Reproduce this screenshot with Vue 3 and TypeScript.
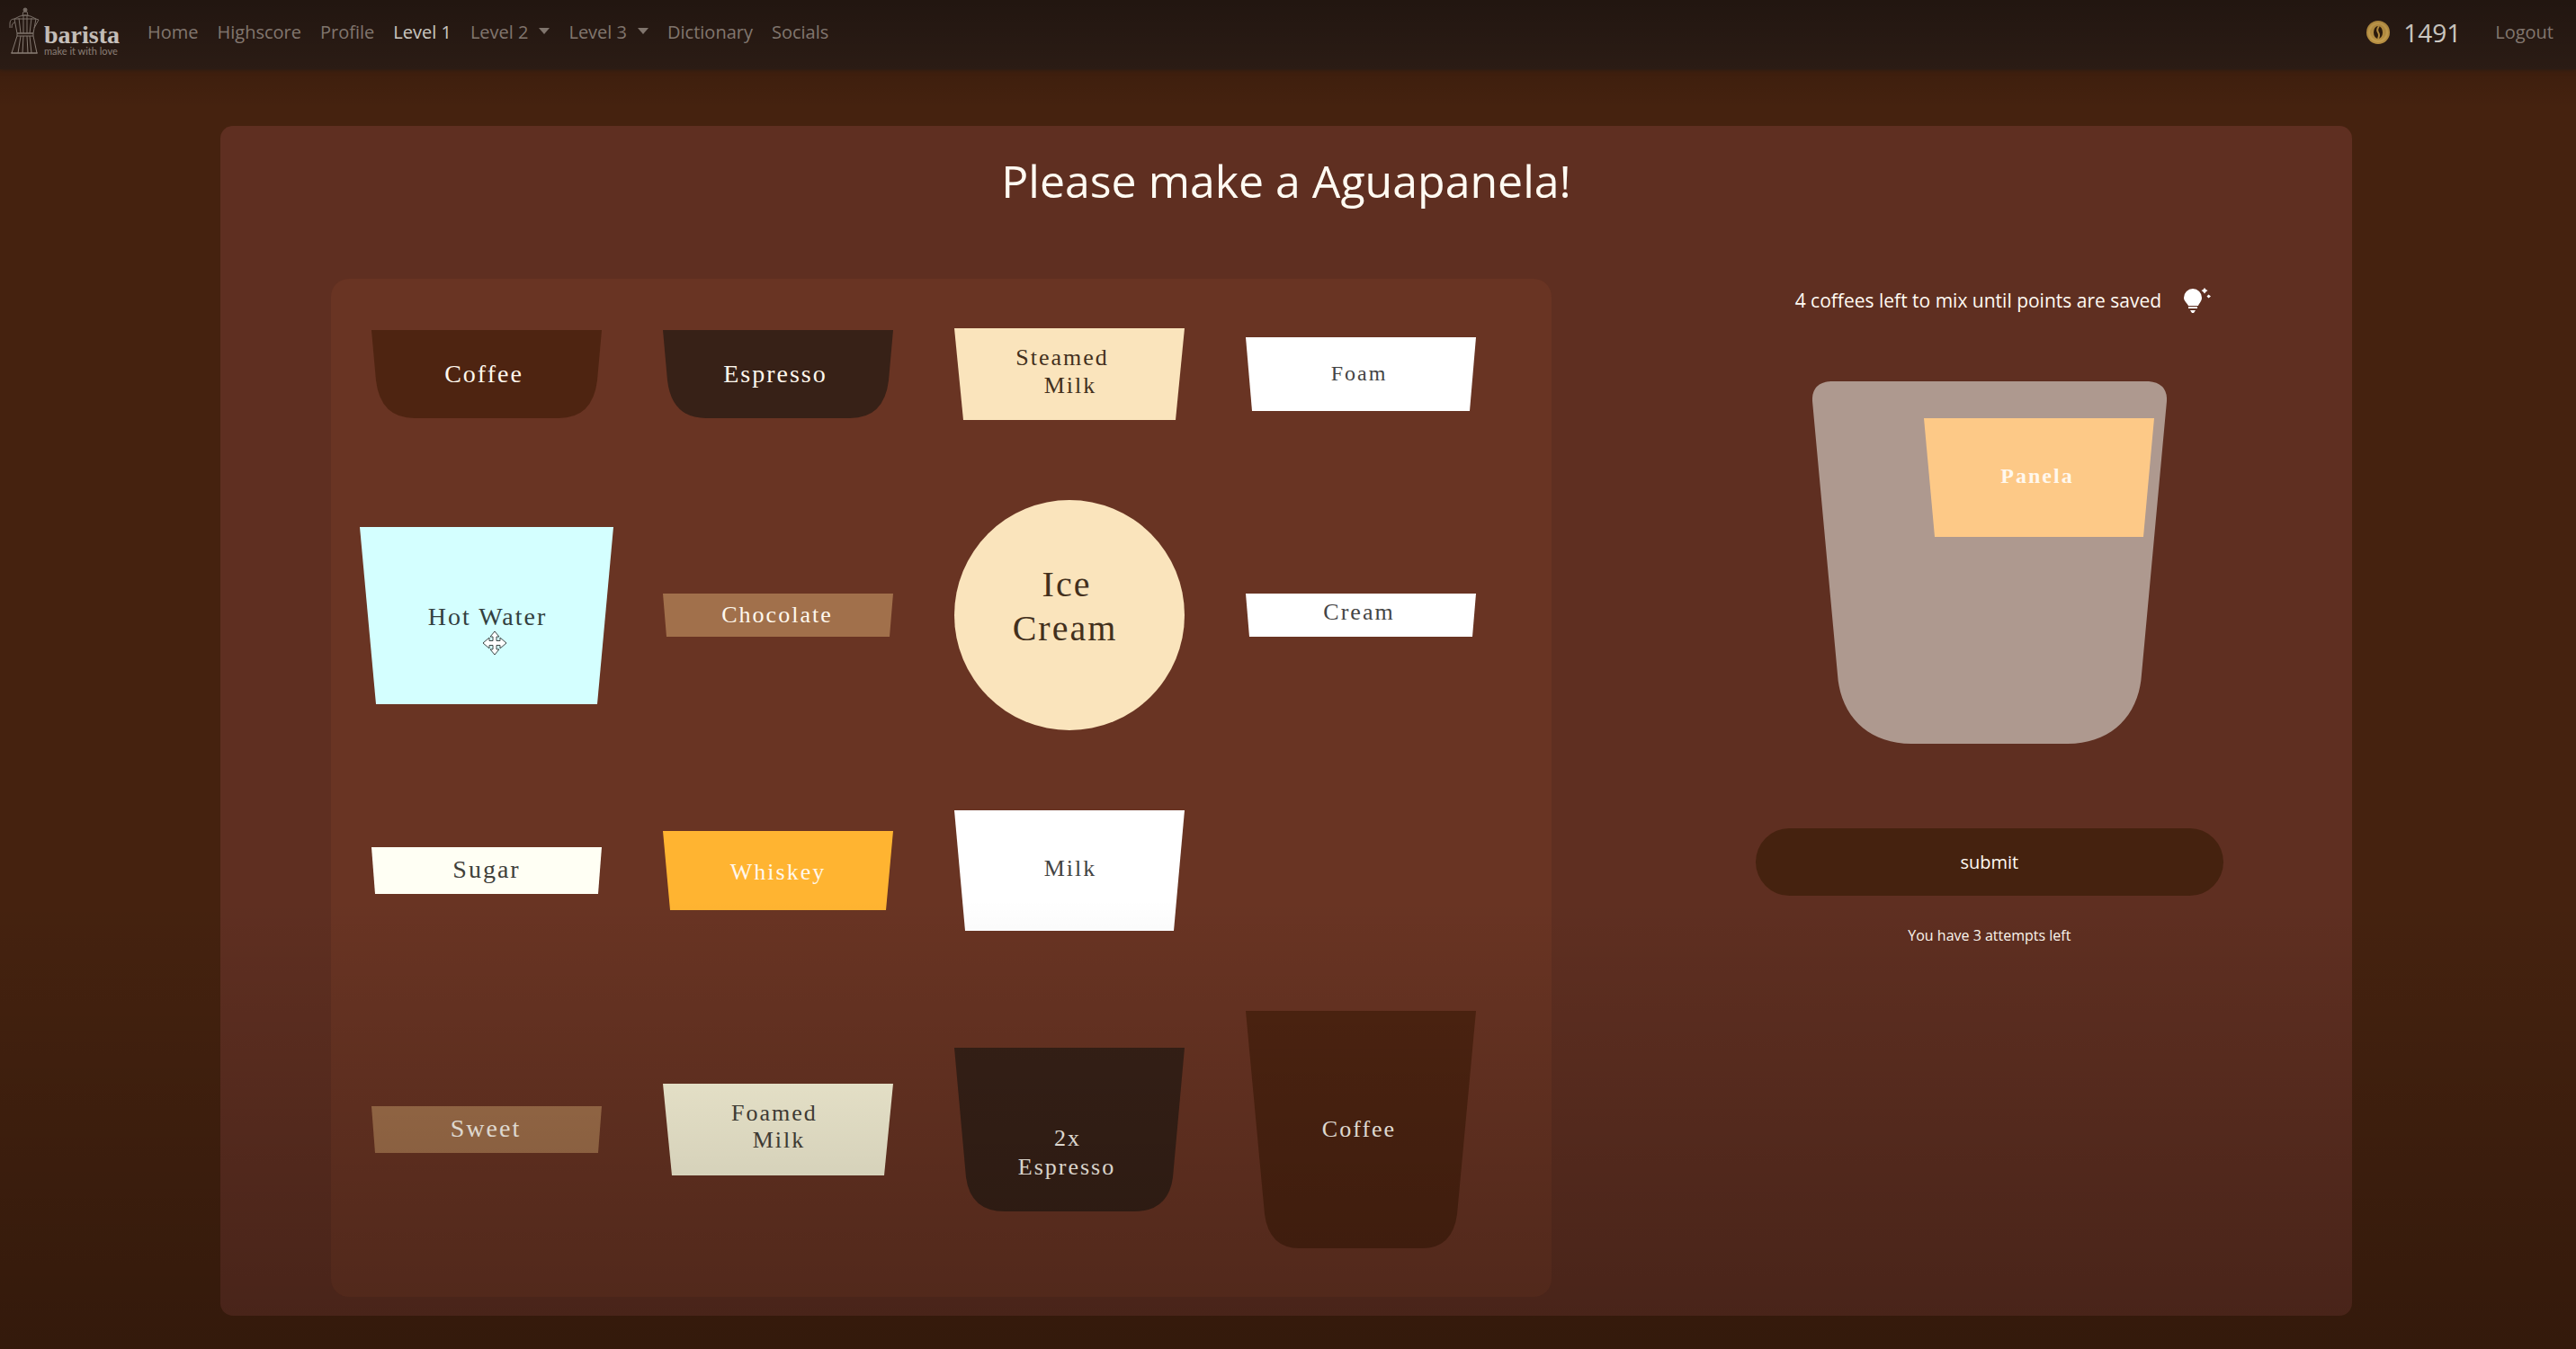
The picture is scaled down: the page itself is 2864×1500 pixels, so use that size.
<script setup lang="ts">
import { ref } from 'vue'

interface Line {
  text: string
  x: number
  y: number
}

interface Ingredient {
  id: string
  width: number
  height: number
  path: string
  fill: string
  ink: string
  size: number
  lines: Line[]
  hovered?: boolean
}

interface NavItem {
  label: string
  active?: boolean
  menu?: boolean
}

const navItems: NavItem[] = [
  { label: 'Home' },
  { label: 'Highscore' },
  { label: 'Profile' },
  { label: 'Level 1', active: true },
  { label: 'Level 2', menu: true },
  { label: 'Level 3', menu: true },
  { label: 'Dictionary' },
  { label: 'Socials' },
]

const points = ref(1491)
const coffeesLeft = ref(4)
const attemptsLeft = ref(3)
const drink = ref('Aguapanela')

// A glass slice: wide at the rim, tapering by `inset` on each side.
const slice = (w: number, h: number, inset: number): string =>
  `M0 0H${w}L${w - inset} ${h}H${inset}Z`

const light = '#fff8ee'

const rows: (Ingredient | null)[][] = [
  [
    { id: 'coffee', width: 256, height: 98, path: 'M0 0H256L251 56Q246 98 208 98H48Q10 98 5 56Z', fill: '#4e2411', ink: light, size: 28, lines: [{ text: 'Coffee', x: 125, y: 58 }] },
    { id: 'espresso', width: 256, height: 98, path: 'M0 0H256L251 56Q246 98 208 98H48Q10 98 5 56Z', fill: '#372117', ink: light, size: 28, lines: [{ text: 'Espresso', x: 125, y: 58 }] },
    { id: 'steamed-milk', width: 256, height: 102, path: slice(256, 102, 10), fill: '#fae4bc', ink: '#43301d', size: 26, lines: [{ text: 'Steamed', x: 120, y: 41 }, { text: 'Milk', x: 129, y: 72 }] },
    { id: 'foam', width: 256, height: 82, path: slice(256, 82, 7), fill: '#ffffff', ink: '#444444', size: 24, lines: [{ text: 'Foam', x: 126, y: 48 }] },
  ],
  [
    { id: 'hot-water', width: 282, height: 197, path: slice(282, 197, 18), fill: '#d4ffff', ink: '#333f3f', size: 28, lines: [{ text: 'Hot Water', x: 142, y: 109 }], hovered: true },
    { id: 'chocolate', width: 256, height: 48, path: slice(256, 48, 4), fill: '#a1704b', ink: light, size: 26, lines: [{ text: 'Chocolate', x: 127, y: 32 }] },
    { id: 'ice-cream', width: 256, height: 256, path: 'M128 0A128 128 0 1 1 128 256A128 128 0 1 1 128 0Z', fill: '#fae4bc', ink: '#43301d', size: 40, lines: [{ text: 'Ice', x: 125, y: 107 }, { text: 'Cream', x: 123, y: 156 }] },
    { id: 'cream', width: 256, height: 48, path: slice(256, 48, 4), fill: '#ffffff', ink: '#444444', size: 26, lines: [{ text: 'Cream', x: 126, y: 29 }] },
  ],
  [
    { id: 'sugar', width: 256, height: 52, path: slice(256, 52, 4), fill: '#fffff4', ink: '#403f3a', size: 28, lines: [{ text: 'Sugar', x: 128, y: 34 }] },
    { id: 'whiskey', width: 256, height: 88, path: slice(256, 88, 8), fill: '#ffb431', ink: light, size: 26, lines: [{ text: 'Whiskey', x: 128, y: 54 }] },
    { id: 'milk', width: 256, height: 134, path: slice(256, 134, 12), fill: '#ffffff', ink: '#444444', size: 26, lines: [{ text: 'Milk', x: 129, y: 73 }] },
    null,
  ],
  [
    { id: 'sweet', width: 256, height: 52, path: slice(256, 52, 4), fill: '#a1704b', ink: light, size: 28, lines: [{ text: 'Sweet', x: 127, y: 34 }] },
    { id: 'foamed-milk', width: 256, height: 102, path: slice(256, 102, 10), fill: '#fdf8dc', ink: '#47433a', size: 26, lines: [{ text: 'Foamed', x: 124, y: 41 }, { text: 'Milk', x: 129, y: 71 }] },
    { id: 'double-espresso', width: 256, height: 182, path: 'M0 0H256L243 144Q238 182 200 182H56Q18 182 13 144Z', fill: '#372117', ink: light, size: 26, lines: [{ text: '2x', x: 126, y: 109 }, { text: 'Espresso', x: 125, y: 141 }] },
    { id: 'large-coffee', width: 256, height: 264, path: 'M0 0H256L235 226Q230 264 196 264H60Q26 264 21 226Z', fill: '#4e2411', ink: light, size: 26, lines: [{ text: 'Coffee', x: 126, y: 140 }] },
  ],
]
</script>

<template>
  <div class="page">
    <header class="navbar">
      <a href="#" class="brand" aria-label="barista, make it with love">
        <svg class="pot" width="36" height="56" viewBox="0 0 36 56" aria-hidden="true">
          <g fill="none" stroke="#a3958b" stroke-width="1">
            <circle cx="19" cy="3" r="2" fill="#a3958b" />
            <path d="M17 5h4l1 4h-6zM7 13Q13 9 19 9T31 13L28 29H10ZM7 13H31L34 14L29 23M7 13Q2 13 2 18V23M4 23Q4 17 8 17" />
            <path d="M10 29h18M10 32h18M10 29v3M28 29v3M10 32L4 51H32L28 32M14 32L11 51M17 32L16 51M21 32L22 51M24 32L26 51M12 12L14 29M17 10V29M21 10V29M26 12L24 29M3 51h30" />
          </g>
        </svg>
        <span class="wordmark">
          <span class="name">barista</span>
          <span class="tagline">make it with love</span>
        </span>
      </a>
      <nav class="links" aria-label="Main">
        <a v-for="item in navItems" :key="item.label" href="#" :class="{ active: item.active }">
          {{ item.label }}<i v-if="item.menu" class="caret"></i>
        </a>
      </nav>
      <div class="account">
        <svg width="28" height="28" viewBox="0 0 28 28" aria-hidden="true">
          <circle cx="14" cy="14" r="13" fill="#dfae50" />
          <circle cx="14" cy="14" r="10" fill="none" stroke="#f0c060" stroke-width="2" />
          <ellipse cx="14" cy="14" rx="5" ry="7" fill="#35200f" />
          <path d="M15 7Q12 11 14 14T14 21" fill="none" stroke="#dfae50" stroke-width="2" />
        </svg>
        <span class="points">{{ points }}</span>
        <a href="#" class="logout">Logout</a>
      </div>
    </header>

    <main class="game">
      <h1>Please make a {{ drink }}!</h1>
      <div class="columns">
        <section class="bench" aria-label="Ingredients">
          <template v-for="(row, r) in rows" :key="r">
            <div v-for="(item, c) in row" :key="c" class="cell">
              <button v-if="item" type="button" class="ingredient" draggable="true">
                <svg :width="item.width" :height="item.height" :viewBox="`0 0 ${item.width} ${item.height}`">
                  <path :d="item.path" :fill="item.fill" />
                  <text
                    v-for="line in item.lines"
                    :key="line.text"
                    :x="line.x"
                    :y="line.y"
                    :fill="item.ink"
                    :font-size="item.size"
                    text-anchor="middle"
                  >{{ line.text }}</text>
                </svg>
                <svg v-if="item.hovered" class="cursor" width="28" height="28" viewBox="0 0 28 28" aria-hidden="true">
                  <path
                    d="M14 1L19 7H16V11.500H20V8L27 14L20 20V16.500H16V21H19L14 27L9 21H12V16.500H8V20L1 14L8 8V11.500H12V7H9Z"
                    fill="#ffffff"
                    stroke="#3c4646"
                    stroke-width="1"
                  />
                </svg>
              </button>
            </div>
          </template>
        </section>

        <section class="mixer" aria-label="Your drink">
          <p class="hint">
            <span>{{ coffeesLeft }} coffees left to mix until points are saved</span>
            <button type="button" class="bulb" aria-label="Show hint">
              <svg width="30" height="28" viewBox="0 0 30 28" aria-hidden="true">
                <path d="M10 1a10 10 0 0 1 10 10c0 4-3 6-4 9H5C4 17 0 15 0 11A10 10 0 0 1 10 1ZM5 21H15V23H5ZM7 25H13L11 28H9Z" fill="#fff" />
                <path d="M23 0L24.500 2L26.500 3L24.500 4.500L23 6.500L21.500 4.500L19.500 3L21.500 2ZM27.500 7.500L30 9.500L27.500 11.500L25.500 9.500Z" fill="#fff" />
              </svg>
            </button>
          </p>
          <div class="glass">
            <svg width="394" height="403" viewBox="0 0 394 403" aria-hidden="true">
              <path d="M20 0H374Q395 2 394 22L366 326C363 372 332 403 284 403H110C62 403 31 372 28 326L0 22Q-1 2 20 0Z" fill="#ae998f" />
            </svg>
            <button type="button" class="ingredient poured" draggable="true">
              <svg width="256" height="132" viewBox="0 0 256 132">
                <path :d="slice(256, 132, 12)" fill="#fdc987" />
                <text x="126" y="72" :fill="light" font-size="24" font-weight="bold" text-anchor="middle">Panela</text>
              </svg>
            </button>
          </div>
          <button type="button" class="submit">submit</button>
          <p class="attempts">You have {{ attemptsLeft }} attempts left</p>
        </section>
      </div>
    </main>
    <div class="shade" aria-hidden="true"></div>
  </div>
</template>

<style>
body {
  background: #45220f;
}
</style>

<style scoped>
.page {
  position: relative;
  box-sizing: border-box;
  min-height: 100vh;
  padding-bottom: 37px;
  overflow: hidden;
  background: #45220f;
  color: #fffaf2;
  font-family: 'Trebuchet MS', 'Open Sans', sans-serif;
}

.shade {
  position: absolute;
  inset: 0;
  pointer-events: none;
  background:
    linear-gradient(rgba(0, 0, 0, 0.3), transparent) top / 100% 120px no-repeat,
    linear-gradient(transparent, rgba(0, 0, 0, 0.25)) bottom / 100% 500px no-repeat;
}

.navbar {
  display: flex;
  align-items: center;
  box-sizing: border-box;
  height: 77px;
  padding: 0 25px 6px 9px;
  background: #301f17;
  box-shadow: 0 1px 4px #301f17;
  font-size: 20px;
}

a {
  color: inherit;
  text-decoration: none;
}

.brand {
  display: flex;
  align-items: center;
  gap: 4px;
  width: 155px;
}

.wordmark {
  display: flex;
  flex-direction: column;
  padding-top: 18px;
  white-space: nowrap;
}

.name {
  color: #f4ece6;
  font: bold 28px/24px 'Liberation Serif', serif;
}

.tagline {
  color: #a3958b;
  font: 11px/12px Lato, sans-serif;
}

.links {
  display: flex;
  flex: 1;
  gap: 21px;
  color: #a3958b;
}

.links .active {
  color: #fffaf2;
}

.caret {
  display: inline-block;
  margin-left: 12px;
  border: 6px solid transparent;
  border-top: 7px solid currentColor;
  border-bottom: 0;
  vertical-align: 5px;
}

.account {
  display: flex;
  align-items: center;
}

.points {
  margin: 0 38px 0 14px;
  color: #fffaf2;
  font-size: 28px;
}

.logout {
  color: #a3958b;
}

.game {
  margin: 63px 249px 0 245px;
  padding: 29px 0 21px;
  border-radius: 14px;
  background: #5f2f21;
}

h1 {
  margin: 0 0 77px;
  font-size: 50px;
  font-weight: 500;
  line-height: 64px;
  text-align: center;
}

.columns {
  display: grid;
  grid-template-columns: 1358fr 807fr;
  gap: 84px;
  padding-left: 123px;
}

.bench {
  display: grid;
  grid-template-columns: repeat(4, 1fr);
  align-items: center;
  row-gap: 89px;
  padding: 55px 50px 54px 11px;
  border-radius: 20px;
  background: #693423;
}

.cell {
  display: flex;
  justify-content: center;
}

.ingredient {
  position: relative;
  display: block;
  padding: 0;
  border: 0;
  background: none;
  cursor: move;
}

.ingredient svg {
  display: block;
}

.ingredient text {
  font-family: 'Liberation Serif', serif;
  letter-spacing: 2px;
}

.ingredient .cursor {
  position: absolute;
  top: 115px;
  left: 136px;
}

.mixer {
  display: flex;
  flex-direction: column;
  align-items: center;
}

.hint {
  display: flex;
  align-items: center;
  gap: 25px;
  height: 30px;
  margin: 9px 0 75px;
  padding-left: 30px;
  font-size: 21px;
}

.bulb {
  padding: 0;
  border: 0;
  background: none;
}

.bulb svg {
  display: block;
}

.glass {
  position: relative;
  margin-bottom: 94px;
}

.glass > svg {
  display: block;
}

.poured {
  position: absolute;
  top: 41px;
  left: 124px;
}

.submit {
  width: 520px;
  height: 75px;
  border: 0;
  border-radius: 38px;
  background: #45220f;
  color: inherit;
  font: inherit;
  font-size: 20px;
}

.attempts {
  margin: 32px 0 0;
  font-size: 16px;
  line-height: 24px;
}
</style>
